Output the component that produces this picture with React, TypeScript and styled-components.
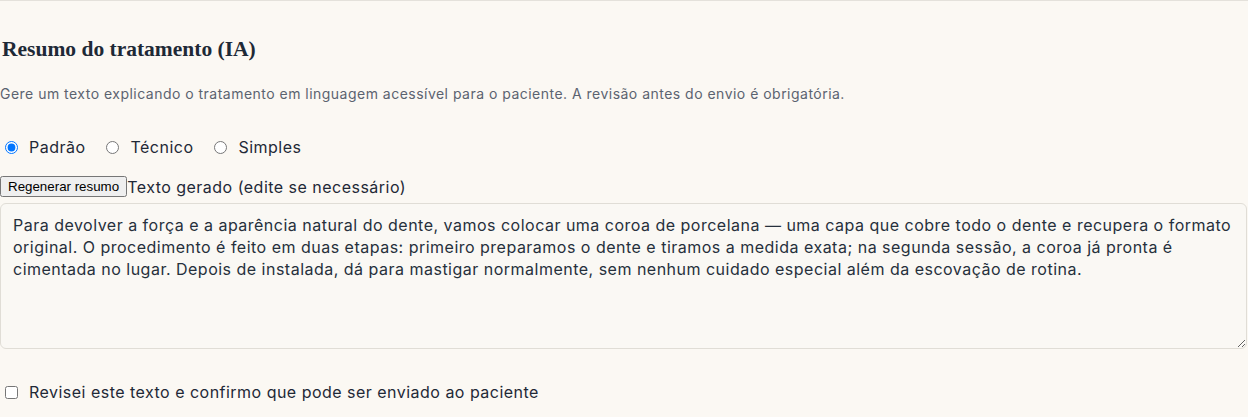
import styled, { createGlobalStyle } from 'styled-components'

const GlobalStyle = createGlobalStyle`
  html, body {
    margin: 0;
    background: #fbf8f3;
  }
  body {
    font-family: Inter, "Noto Sans", sans-serif;
    color: #1f2937;
    letter-spacing: 0.48px;
  }
`

const Section = styled.section`
  border-top: 1px solid #e4e1db;
  padding-top: 35px;
  padding-right: 1px;
`

const Title = styled.h3`
  margin: 0 0 0 2px;
  font-family: "Liberation Serif", "DejaVu Serif", serif;
  font-size: 21.5px;
  line-height: 26px;
  font-weight: 700;
  letter-spacing: 0;
  color: #1e2936;
`

const Hint = styled.p`
  margin: 22px 0 0;
  font-size: 14px;
  line-height: 20px;
  color: #5b6370;
`

const RadioRow = styled.div`
  display: flex;
  align-items: center;
  margin-top: 31px;
  height: 24px;
  font-size: 16px;
`

const Option = styled.label`
  display: inline-flex;
  align-items: center;
  margin-right: 16px;
  color: #1f2937;

  input {
    margin: 0 11px 0 5px;
    width: 13px;
    height: 13px;
  }
`

const ActionRow = styled.div`
  display: flex;
  align-items: center;
  margin-top: 17px;
  height: 21px;
`

const Button = styled.button`
  font-family: "Liberation Sans", Arial, sans-serif;
  font-size: 13.33px;
  letter-spacing: 0;
  height: 21px;
  padding: 1px 6px;
  margin: 0;
`

const FieldLabel = styled.label`
  font-size: 16px;
  color: #1f2937;
`

const Summary = styled.textarea`
  display: block;
  box-sizing: border-box;
  width: 100%;
  height: 146px;
  margin-top: 6px;
  padding: 10px 12px;
  border: 1px solid #e0ddd6;
  border-radius: 6px;
  background: #faf8f4;
  font-family: Inter, "Noto Sans", sans-serif;
  font-size: 16px;
  letter-spacing: 0.49px;
  line-height: 22px;
  color: #26303c;
  resize: vertical;
  outline: none;
`

const Confirm = styled.label`
  display: flex;
  align-items: center;
  margin-top: 31px;
  height: 24px;
  font-size: 16px;
  color: #1f2937;

  input {
    margin: 0 11px 0 5px;
    width: 13px;
    height: 13px;
  }
`

const summary =
  'Para devolver a força e a aparência natural do dente, vamos colocar uma coroa de porcelana — uma capa que cobre todo o dente e recupera o formato original. O procedimento é feito em duas etapas: primeiro preparamos o dente e tiramos a medida exata; na segunda sessão, a coroa já pronta é cimentada no lugar. Depois de instalada, dá para mastigar normalmente, sem nenhum cuidado especial além da escovação de rotina.'

const tones = ['Padrão', 'Técnico', 'Simples']

export default function App() {
  return (
    <>
      <GlobalStyle />
      <Section>
        <Title>Resumo do tratamento (IA)</Title>
        <Hint>
          Gere um texto explicando o tratamento em linguagem acessível para o paciente. A revisão antes do envio é obrigatória.
        </Hint>
        <RadioRow>
          {tones.map((t, i) => (
            <Option key={t}>
              <input type="radio" name="tone" defaultChecked={i === 0} />
              {t}
            </Option>
          ))}
        </RadioRow>
        <ActionRow>
          <Button type="button">Regenerar resumo</Button>
          <FieldLabel htmlFor="summary">Texto gerado (edite se necessário)</FieldLabel>
        </ActionRow>
        <Summary id="summary" defaultValue={summary} />
        <Confirm>
          <input type="checkbox" />
          Revisei este texto e confirmo que pode ser enviado ao paciente
        </Confirm>
      </Section>
    </>
  )
}
